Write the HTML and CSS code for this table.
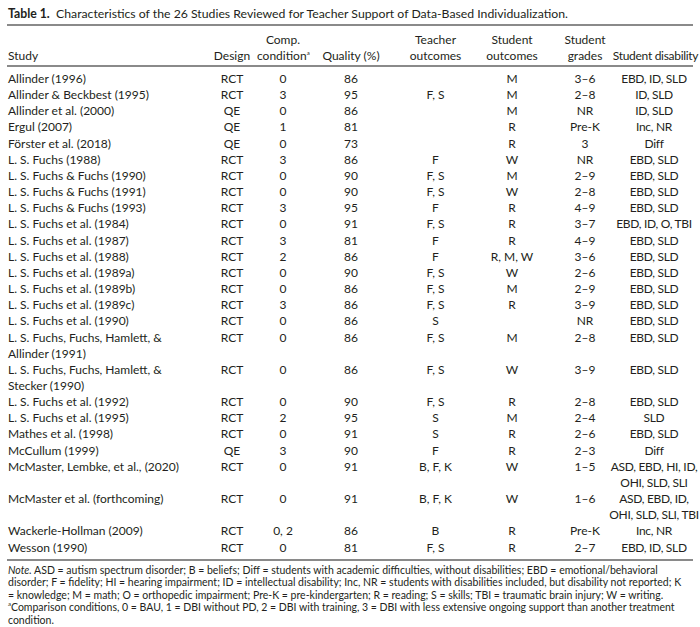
FILE: index.html
```html
<!DOCTYPE html>
<html lang="en">
<head>
<meta charset="utf-8">
<title>Table 1</title>
<link rel="stylesheet" href="styles.css">
</head>
<body>
<div class="page">
  <p class="caption"><span class="label">Table 1.</span>&nbsp; Characteristics of the 26 Studies Reviewed for Teacher Support of Data-Based Individualization.</p>
  <table class="data">
    <colgroup>
      <col class="c-study"><col class="c-design"><col class="c-comp"><col class="c-quality"><col class="c-teacher"><col class="c-sout"><col class="c-grades"><col class="c-dis">
    </colgroup>
    <thead>
      <tr>
        <th class="left">Study</th>
        <th>Design</th>
        <th>Comp.<br>condition<sup>a</sup></th>
        <th>Quality (%)</th>
        <th>Teacher<br>outcomes</th>
        <th>Student<br>outcomes</th>
        <th>Student<br>grades</th>
        <th class="dis"><span class="fit">Student disability</span></th>
      </tr>
    </thead>
    <tbody>
      <tr class="first"><td class="left">Allinder (1996)</td><td>RCT</td><td>0</td><td>86</td><td></td><td>M</td><td>3–6</td><td class="dis"><span class="fit">EBD, ID, SLD</span></td></tr>
      <tr><td class="left">Allinder &amp; Beckbest (1995)</td><td>RCT</td><td>3</td><td>95</td><td>F, S</td><td>M</td><td>2–8</td><td class="dis"><span class="fit">ID, SLD</span></td></tr>
      <tr><td class="left">Allinder et al. (2000)</td><td>QE</td><td>0</td><td>86</td><td></td><td>M</td><td>NR</td><td class="dis"><span class="fit">ID, SLD</span></td></tr>
      <tr><td class="left">Ergul (2007)</td><td>QE</td><td>1</td><td>81</td><td></td><td>R</td><td>Pre-K</td><td class="dis"><span class="fit">Inc, NR</span></td></tr>
      <tr><td class="left">Förster et al. (2018)</td><td>QE</td><td>0</td><td>73</td><td></td><td>R</td><td>3</td><td class="dis"><span class="fit">Diff</span></td></tr>
      <tr><td class="left">L. S. Fuchs (1988)</td><td>RCT</td><td>3</td><td>86</td><td>F</td><td>W</td><td>NR</td><td class="dis"><span class="fit">EBD, SLD</span></td></tr>
      <tr><td class="left">L. S. Fuchs &amp; Fuchs (1990)</td><td>RCT</td><td>0</td><td>90</td><td>F, S</td><td>M</td><td>2–9</td><td class="dis"><span class="fit">EBD, SLD</span></td></tr>
      <tr><td class="left">L. S. Fuchs &amp; Fuchs (1991)</td><td>RCT</td><td>0</td><td>90</td><td>F, S</td><td>W</td><td>2–8</td><td class="dis"><span class="fit">EBD, SLD</span></td></tr>
      <tr><td class="left">L. S. Fuchs &amp; Fuchs (1993)</td><td>RCT</td><td>3</td><td>95</td><td>F</td><td>R</td><td>4–9</td><td class="dis"><span class="fit">EBD, SLD</span></td></tr>
      <tr><td class="left">L. S. Fuchs et al. (1984)</td><td>RCT</td><td>0</td><td>91</td><td>F, S</td><td>R</td><td>3–7</td><td class="dis"><span class="fit">EBD, ID, O, TBI</span></td></tr>
      <tr><td class="left">L. S. Fuchs et al. (1987)</td><td>RCT</td><td>3</td><td>81</td><td>F</td><td>R</td><td>4–9</td><td class="dis"><span class="fit">EBD, SLD</span></td></tr>
      <tr><td class="left">L. S. Fuchs et al. (1988)</td><td>RCT</td><td>2</td><td>86</td><td>F</td><td>R, M, W</td><td>3–6</td><td class="dis"><span class="fit">EBD, SLD</span></td></tr>
      <tr><td class="left">L. S. Fuchs et al. (1989a)</td><td>RCT</td><td>0</td><td>90</td><td>F, S</td><td>W</td><td>2–6</td><td class="dis"><span class="fit">EBD, SLD</span></td></tr>
      <tr><td class="left">L. S. Fuchs et al. (1989b)</td><td>RCT</td><td>0</td><td>86</td><td>F, S</td><td>M</td><td>2–9</td><td class="dis"><span class="fit">EBD, SLD</span></td></tr>
      <tr><td class="left">L. S. Fuchs et al. (1989c)</td><td>RCT</td><td>3</td><td>86</td><td>F, S</td><td>R</td><td>3–9</td><td class="dis"><span class="fit">EBD, SLD</span></td></tr>
      <tr><td class="left">L. S. Fuchs et al. (1990)</td><td>RCT</td><td>0</td><td>86</td><td>S</td><td></td><td>NR</td><td class="dis"><span class="fit">EBD, SLD</span></td></tr>
      <tr><td class="left">L. S. Fuchs, Fuchs, Hamlett, &amp;<br>Allinder (1991)</td><td>RCT</td><td>0</td><td>86</td><td>F, S</td><td>M</td><td>2–8</td><td class="dis"><span class="fit">EBD, SLD</span></td></tr>
      <tr><td class="left">L. S. Fuchs, Fuchs, Hamlett, &amp;<br>Stecker (1990)</td><td>RCT</td><td>0</td><td>86</td><td>F, S</td><td>W</td><td>3–9</td><td class="dis"><span class="fit">EBD, SLD</span></td></tr>
      <tr><td class="left">L. S. Fuchs et al. (1992)</td><td>RCT</td><td>0</td><td>90</td><td>F, S</td><td>R</td><td>2–8</td><td class="dis"><span class="fit">EBD, SLD</span></td></tr>
      <tr><td class="left">L. S. Fuchs et al. (1995)</td><td>RCT</td><td>2</td><td>95</td><td>S</td><td>M</td><td>2–4</td><td class="dis"><span class="fit">SLD</span></td></tr>
      <tr><td class="left">Mathes et al. (1998)</td><td>RCT</td><td>0</td><td>91</td><td>S</td><td>R</td><td>2–6</td><td class="dis"><span class="fit">EBD, SLD</span></td></tr>
      <tr><td class="left">McCullum (1999)</td><td>QE</td><td>3</td><td>90</td><td>F</td><td>R</td><td>2–3</td><td class="dis"><span class="fit">Diff</span></td></tr>
      <tr><td class="left">McMaster, Lembke, et al., (2020)</td><td>RCT</td><td>0</td><td>91</td><td>B, F, K</td><td>W</td><td>1–5</td><td class="dis"><span class="fit">ASD, EBD, HI, ID,<br>OHI, SLD, SLI</span></td></tr>
      <tr><td class="left">McMaster et al. (forthcoming)</td><td>RCT</td><td>0</td><td>91</td><td>B, F, K</td><td>W</td><td>1–6</td><td class="dis"><span class="fit">ASD, EBD, ID,<br>OHI, SLD, SLI, TBI</span></td></tr>
      <tr><td class="left">Wackerle-Hollman (2009)</td><td>RCT</td><td>0, 2</td><td>86</td><td>B</td><td>R</td><td>Pre-K</td><td class="dis"><span class="fit">Inc, NR</span></td></tr>
      <tr class="last"><td class="left">Wesson (1990)</td><td>RCT</td><td>0</td><td>81</td><td>F, S</td><td>R</td><td>2–7</td><td class="dis"><span class="fit">EBD, ID, SLD</span></td></tr>
    </tbody>
  </table>
  <div class="note">
    <p><em>Note.</em> ASD = autism spectrum disorder; B = beliefs; Diff = students with academic difficulties, without disabilities; EBD = emotional/behavioral<br>disorder; F = fidelity; HI = hearing impairment; ID = intellectual disability; Inc, NR = students with disabilities included, but disability not reported; K<br>= knowledge; M = math; O = orthopedic impairment; Pre-K = pre-kindergarten; R = reading; S = skills; TBI = traumatic brain injury; W = writing.</p>
    <p><sup>a</sup>Comparison conditions, 0 = BAU, 1 = DBI without PD, 2 = DBI with training, 3 = DBI with less extensive ongoing support than another treatment<br>condition.</p>
  </div>
</div>
</body>
</html>
```
FILE: styles.css
```css
html, body {
  margin: 0;
  padding: 0;
  background: #ffffff;
}
body {
  padding: 6px 7px 0 7px;
  font-family: Lato, "Open Sans", sans-serif;
  color: #231f20;
}
.page {
  width: 686px;
}
.caption {
  margin: 0 0 2px 1px;
  font-size: 12.25px;
  line-height: 16px;
  white-space: nowrap;
}
.caption .label {
  font-weight: 700;
}
.data {
  width: 686px;
  table-layout: fixed;
  border-collapse: collapse;
  font-size: 12px;
  border-top: 2px solid #8a8a8a;
  border-bottom: 2px solid #8a8a8a;
}
.c-study { width: 200px; }
.c-design { width: 50px; }
.c-comp { width: 52px; }
.c-quality { width: 84px; }
.c-teacher { width: 85px; }
.c-sout { width: 68px; }
.c-grades { width: 78px; }
.c-dis { width: 69px; }
.data th, .data td {
  padding: 0;
  text-align: center;
  white-space: nowrap;
}
.data th {
  font-weight: 400;
  line-height: 16px;
  vertical-align: bottom;
  padding: 6px 0 1px 0;
  border-bottom: 2px solid #8a8a8a;
}
.data td {
  line-height: 16.15px;
  vertical-align: top;
}
.data .left {
  text-align: left;
  padding-left: 1px;
}
.data .dis {
  padding-right: 9px;
}
.data .fit {
  display: inline-block;
  margin: 0 -30px;
  letter-spacing: -0.3px;
}
.data th.dis {
  padding-right: 6px;
}
.data sup, .note sup {
  font-size: 6px;
  line-height: 0;
  vertical-align: 5px;
}
.data tr.first td {
  padding-top: 4px;
}
.data tr.last td {
  padding-bottom: 3px;
}
.note {
  margin-top: 3px;
  padding-left: 1px;
  font-size: 10.5px;
  line-height: 12.5px;
  white-space: nowrap;
}
.note p {
  margin: 0;
}
```
